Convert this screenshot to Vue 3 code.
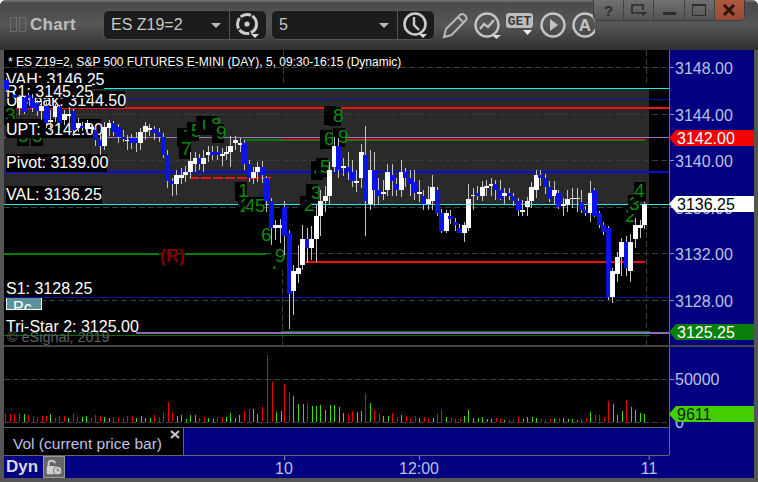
<script setup>
const W = 0, B = 1
const candles = [
  [4,80,90,78,92,B],[12,95,97,92,99,B],[17,97,108,95,115,W],[22,98,112,96,114,B],[26,95,98,93,100,B],[30,98,108,94,112,B],[35,103,111,100,116,B],[39,106,111,100,120,W],[44,106,123,100,128,B],[48,120,122,110,131,W],[53,106,117,104,122,W],[57,107,123,105,128,B],[62,114,120,110,125,W],[67,114,116,107,124,W],[71,111,130,109,136,B],[76,123,128,118,132,W],[80,126,128,122,131,B],[85,123,129,120,135,W],[89,127,129,124,134,W],[93,130,140,126,146,B],[98,140,146,135,155,B],[102,127,146,122,150,W],[107,123,128,120,136,W],[111,123,132,121,136,B],[116,127,137,124,143,B],[121,137,139,130,142,B],[125,140,141,135,150,W],[129,138,143,134,149,B],[134,138,143,132,152,B],[138,132,143,128,150,W],[143,126,132,122,140,W],[147,128,130,124,136,W],[152,129,133,126,140,B],[157,132,137,128,142,B],[161,137,155,133,158,B],
  [165,155,181,150,188,B],[170,181,184,178,196,B],[174,175,184,170,195,W],[179,175,178,168,184,W],[183,172,175,166,182,W],[188,161,172,152,178,W],[193,158,164,152,172,W],[197,158,164,154,170,B],[201,158,164,150,172,W],[206,152,155,146,162,W],[210,152,155,146,160,B],[215,152,155,146,160,B],[220,152,155,148,162,B],[220,154,156,148,166,W],[224,152,154,146,160,W],[228,146,152,136,167,W],[233,140,143,136,150,W],[238,143,145,138,152,W],[242,143,164,140,170,B],[247,164,178,160,182,B],[251,172,178,167,184,W],[255,167,172,162,182,W],[260,167,175,161,183,B],[264,178,201,176,212,B],
  [269,201,228,198,245,B],[273,225,228,220,240,W],[278,225,228,219,243,W],[282,207,236,201,255,B],[287,233,294,230,329,B],[291,271,291,265,315,W],[296,268,274,245,283,W],[300,239,265,225,270,W],[305,239,248,228,263,B],[309,239,248,226,260,W],[314,216,239,205,262,W],[318,201,216,190,236,W],[323,196,201,186,212,W],[327,170,196,162,205,W],[332,146,167,137,172,W],[336,146,170,138,178,B],[341,166,168,158,176,W],[346,167,172,152,180,B],[350,172,181,160,187,B],[354,181,183,170,192,W],[359,152,178,144,188,W],[363,155,201,126,236,B],[368,170,204,150,210,W],[372,170,190,152,206,B],[376,190,196,178,204,B],
  [381,192,194,180,200,W],[385,172,190,164,196,W],[390,175,181,164,196,B],[394,184,190,178,196,B],[399,172,190,160,197,W],[403,172,178,168,187,B],[408,178,184,170,196,B],[412,182,193,170,200,B],[417,192,194,180,202,W],[421,196,204,190,210,B],[426,199,204,186,210,W],[430,187,201,175,210,W],[435,190,213,187,216,B],[439,213,231,209,233,B],[444,213,231,210,233,W],[448,216,219,210,224,B],[453,222,225,218,231,B],[457,228,233,224,233,B],[462,225,233,222,242,W],[466,199,228,184,231,W],[471,195,196,188,210,W],[475,193,196,186,200,B],[480,187,196,181,201,W],[484,186,188,180,196,W],[489,184,186,178,196,W],[493,184,190,180,200,B],[498,190,199,180,200,B],[502,193,196,188,204,W],[507,193,196,188,200,B],[511,196,201,193,206,B],[516,201,210,198,216,B],[520,210,212,200,216,W],[525,201,207,197,216,W],[529,187,201,182,208,W],[534,175,190,170,198,W],[538,175,178,170,186,B],[543,178,187,174,194,B],[547,187,199,181,202,B],[552,190,196,181,204,W],[556,193,207,190,209,B],[561,204,206,198,216,W],[565,199,205,190,212,W],
  [570,198,199,188,208,W],[575,198,199,188,212,W],[579,202,210,190,213,B],[583,210,213,206,216,B],[588,193,213,181,222,W],[592,190,216,188,217,B],[597,213,225,211,228,B],[601,225,232,222,235,B],[606,228,297,226,300,B],[610,271,297,268,303,W],[615,257,274,252,282,W],[619,242,257,238,276,W],[624,242,268,236,276,B],[628,242,271,234,282,W],[633,225,239,218,248,W],[638,225,228,220,238,W],[642,204,225,202,229,W]
]

const digits = [
  [4,5,121,'3'],[17,18,142,'5'],[31,32,142,'5'],[177,183,143,'7'],[187,191,137,'5'],[196,202,131,'6'],[205,211,131,'8'],[212,216,139,'9'],[179,181,155,'7'],
  [235,238,197,'1'],[238,240,212,'2'],[245,245,212,'4'],[253,255,212,'5'],[257,261,241,'6'],[266,270,269,'7'],[271,275,262,'9'],
  [300,304,211,'2'],[306,311,199,'3'],[311,314,176,'4'],[316,320,173,'5'],[320,324,145,'6'],[324,328,121,'7'],[329,333,122,'8'],[333,338,143,'9'],
  [624,625,222,'2'],[628,629,210,'3'],[634,634,197,'4']
]

const lines = [
  { x1: 4, x2: 669, y: 88.5, c: '#16f0f0', w: 1 },
  { x1: 4, x2: 669, y: 99.5, c: '#1010b0', w: 1 },
  { x1: 4, x2: 669, y: 108, c: '#f81010', w: 2 },
  { x1: 4, x2: 669, y: 137.5, c: '#a078c0', w: 1 },
  { x1: 244, x2: 645, y: 140, c: '#0a7a0a', w: 2 },
  { x1: 281, x2: 645, y: 139, c: '#f01010', w: 1 },
  { x1: 4, x2: 669, y: 172, c: '#0808f0', w: 2 },
  { x1: 4, x2: 669, y: 204.5, c: '#16f0f0', w: 1 },
  { x1: 306, x2: 645, y: 262, c: '#f01010', w: 2 },
  { x1: 4, x2: 669, y: 297.5, c: '#1010b0', w: 1 },
  { x1: 281, x2: 650, y: 331.5, c: '#0a7a0a', w: 1 },
  { x1: 136, x2: 669, y: 333, c: '#9068c0', w: 2 },
  { x1: 4, x2: 650, y: 335.5, c: '#0a6a0a', w: 1 }
]

const grid = [67.5, 114.5, 160.5, 207.5, 253.5, 300.5]

const labels = [
  { t: 'VAH: 3146.25', x: 6, y: 85, bx: 6, by: 70, bw: 98, bh: 19 },
  { t: 'UBreak: 3144.50', x: 6, y: 106, bx: 6, by: 91, bw: 119, bh: 17 },
  { t: 'R1: 3145.25', x: 6, y: 97, bx: 6, by: 83, bw: 86, bh: 15 },
  { t: 'UPT: 3142.00', x: 6, y: 135, bx: 6, by: 119, bw: 95, bh: 19 },
  { t: 'Pivot: 3139.00', x: 6, y: 168, bx: 6, by: 154, bw: 101, bh: 18 },
  { t: 'VAL: 3136.25', x: 6, y: 200, bx: 6, by: 186, bw: 96, bh: 18 },
  { t: 'S1: 3128.25', x: 6, y: 294, bx: 6, by: 282, bw: 86, bh: 15 },
  { t: 'Tri-Star 2: 3125.00', x: 6, y: 332, bx: 6, by: 318, bw: 130, bh: 15 }
]

const axisTicks = [
  { t: '3148.00', y: 67.5 }, { t: '3144.00', y: 114.5 }, { t: '3140.00', y: 160.5 },
  { t: '3136.00', y: 207.5 }, { t: '3132.00', y: 253.5 }, { t: '3128.00', y: 300.5 }
]

const flags = [
  { t: '3142.00', y: 130, bg: '#f50000', fg: '#fff' },
  { t: '3136.25', y: 196, bg: '#fff', fg: '#000' },
  { t: '3125.25', y: 324, bg: '#0a800a', fg: '#fff' },
  { t: '9611', y: 406, bg: '#44d000', fg: '#062006' }
]

const flagPts = y => `669,${y + 8} 676,${y} 754,${y} 754,${y + 16} 676,${y + 16}`

const volA = '15r8 30r8 43r8 58r9 71g8 85r7 98r6 112r5 125r6 138r6 151g8 165r4 178r6 192r6 205g4 220r8 232r5 246g5 259g6 272r4 286r7 300r6 313g5 327g4 340r5 355r4 368r4 381r6 395r6 408g4 422g6 436g4 449g4 463r7 476r5 490r10 503r20 517r10 530g6 544g7 557g3 571g7 584g7 598r4 612r5 625g4 639g3 652r5 666r5 679g5 691g9 705g4 718g7 733r11 746r13 760g13 772g8 787r15 800r67 815r40 827g10 842g11 853r38 868r30 880g26 895g18 908g18 922r19 935g16 948g16 961g17 976g12 989g17 1003g17 1016g15'
const volB = '10g9 23r8 37r11 50g10 64g11 76r29 91g19 103r12 116r9 130g6 143g6 157r9 170r5 184g7 197r6 211r4 224r6 238g4 251r5 265r3 278g4 292r8 304r12 319g5 332r4 346r3 359r3 373g6 385g12 400g4 413g4 427g5 440g3 453g3 467r4 480r3 493g2 507r2 520r2 535r5 548g3 562g5 575g5 589g4 602r3 616r2 630r3 643g3 656r4 670g4 683g3 697g3 710g2 724r3 737r4 751g10 764r7 778r7 791r5 805r21 818g18 832g7 845g11 859r22 872g15 886g12 899g9 913g8'
const parseVol = (s, off) => s.split(' ').map(v => {
  const m = v.match(/(\d+)([rg])(\d+)/)
  return { x: off + Math.round(+m[1] / 3), h: +m[3], c: m[2] === 'r' ? '#f00000' : '#44dc00' }
})
const volume = [...parseVol(volA, 0), ...parseVol(volB, 340)]
</script>

<template>
  <div class="win">
    <header class="titlebar">
      <div class="grip"><i></i><i></i></div>
      <span class="title">Chart</span>

      <div class="combo first">
        <span class="combo-text">ES Z19=2</span>
        <b class="caret"></b>
        <span class="combo-btn">
          <svg width="30" height="30" viewBox="0 0 30 30">
            <circle cx="14" cy="14" r="9.5" fill="none" stroke="#ccc" stroke-width="3" stroke-dasharray="11 1.5" />
            <circle cx="14" cy="14" r="2.6" fill="#ccc" />
            <path d="M18 24h8l-4 4z" fill="#ddd" />
          </svg>
        </span>
      </div>

      <div class="combo second">
        <span class="combo-text">5</span>
        <b class="caret"></b>
        <span class="combo-btn">
          <svg width="30" height="30" viewBox="0 0 30 30">
            <circle cx="14" cy="14" r="10.5" fill="none" stroke="#ccc" stroke-width="2.6" />
            <path d="M13 7v8l5 5" fill="none" stroke="#ccc" stroke-width="2.4" />
            <path d="M18 24h8l-4 4z" fill="#ddd" />
          </svg>
        </span>
      </div>

      <svg class="tool" width="28" height="28" viewBox="0 0 28 28">
        <path d="M3 26l2-8L19 4c1.500-1.500 3-1.500 4.500 0l1 1c1.500 1.500 1.500 3 0 4.500L10.500 24z" fill="none" stroke="#b8b8b8" stroke-width="2" />
        <path d="M17 6l6 6" stroke="#b8b8b8" stroke-width="2" />
      </svg>
      <svg class="tool" width="32" height="28" viewBox="0 0 32 28">
        <circle cx="14" cy="14" r="11.500" fill="none" stroke="#c4c4c4" stroke-width="2.400" />
        <path d="M7 18l4-5 4 3 6-7" fill="none" stroke="#c4c4c4" stroke-width="2.200" />
        <path d="M19 24h9l-4.500 4z" fill="#ddd" />
      </svg>
      <svg class="tool get-ic" width="28" height="28" viewBox="0 0 28 28">
        <rect x="0" y="2" width="27" height="15" rx="3" fill="#bdbdbd" />
        <text x="13.500" y="14" class="get">GET</text>
        <path d="M17 19h9l-4.500 5z" fill="#eee" />
      </svg>
      <svg class="tool" width="28" height="28" viewBox="0 0 28 28">
        <circle cx="14" cy="14" r="11.500" fill="none" stroke="#c4c4c4" stroke-width="2.400" />
        <path d="M11 8l8 6-8 6z" fill="#c4c4c4" />
      </svg>
      <svg class="tool" width="24" height="28" viewBox="0 0 24 28">
        <circle cx="14" cy="14" r="11.500" fill="none" stroke="#c4c4c4" stroke-width="2.400" />
        <text x="14" y="20" class="tool-a">A</text>
      </svg>

      <div class="winbtns">
        <span class="wb help">?</span>
        <span class="wb">
          <svg width="18" height="14" viewBox="0 0 18 14">
            <path d="M11 10H2V2h11v5" fill="none" stroke="#2c2c2c" stroke-width="1.600" />
            <path d="M10 9h7l-3.500 4z" fill="#2c2c2c" />
          </svg>
        </span>
        <span class="wb"><b class="min"></b></span>
        <span class="wb"><b class="max"></b></span>
        <span class="wb close">
          <svg width="14" height="12" viewBox="0 0 14 12">
            <path d="M2 1l10 10M12 1L2 11" stroke="#2a1410" stroke-width="3" />
          </svg>
        </span>
      </div>
    </header>

    <div class="body">
      <div class="left">
        <svg class="price" width="665" height="295" viewBox="4 50 665 295">
          <rect x="4" y="50" width="665" height="295" fill="#000" />
          <rect x="4" y="88" width="645" height="116" fill="#2a2a2a" />

          <line v-for="g in grid" :key="g" x1="4" x2="669" :y1="g" :y2="g" class="grid" />
          <line x1="283.500" x2="283.500" y1="50" y2="85" class="grid" />
          <line x1="282.500" x2="282.500" y1="270" y2="345" class="grid" />
          <line x1="646.500" x2="646.500" y1="50" y2="85" class="grid" />
          <line x1="646.500" x2="646.500" y1="205" y2="345" class="grid" />

          <line v-for="(l, i) in lines" :key="i" :x1="l.x1" :x2="l.x2" :y1="l.y" :y2="l.y" :stroke="l.c" :stroke-width="l.w" />
          <line x1="189" x2="271" y1="178" y2="178" stroke="#f01010" stroke-width="2" stroke-dasharray="10 2" />
          <line x1="4" x2="159" y1="254" y2="254" stroke="#0a7a0a" stroke-width="2" />
          <line x1="185" x2="271" y1="254" y2="254" stroke="#0a7a0a" stroke-width="2" />
          <text x="160" y="262" class="resist">(R)</text>

          <text x="8" y="66" class="head">* ES Z19=2, S&amp;P 500 FUTURES E-MINI (DAY), 5, 09:30-16:15 (Dynamic)</text>

          <g v-for="(d, i) in digits" :key="'d' + i">
            <rect :x="d[0]" :y="d[2] - 15" width="12" height="19" fill="#000" />
            <text :x="d[1]" :y="d[2]" class="digit">{{ d[3] }}</text>
          </g>

          <rect x="6" y="298" width="36" height="12" fill="#5a929a" />
          <text x="13" y="313" class="pc">Pc</text>
          <rect x="6" y="298" width="1" height="12" fill="#fff" />
          <rect x="41" y="298" width="1" height="12" fill="#fff" />
          <rect x="6" y="309" width="36" height="24" fill="#000" />
          <rect x="6" y="309" width="36" height="1" fill="#fff" />

          <g v-for="l in labels" :key="l.t">
            <rect :x="l.bx" :y="l.by" :width="l.bw" :height="l.bh" fill="#000" />
            <text :x="l.x" :y="l.y" class="label">{{ l.t }}</text>
          </g>
          <text x="7" y="342" class="copy">© eSignal, 2019</text>

          <g v-for="(c, i) in candles" :key="'c' + i">
            <line :x1="c[0] + 2.500" :x2="c[0] + 2.500" :y1="c[3]" :y2="c[4]" class="wick" />
            <rect :x="c[0]" :y="c[1]" width="5" :height="c[2] - c[1]" :fill="c[5] ? '#0a14ea' : '#fff'" />
          </g>
        </svg>

        <div class="sep"></div>

        <svg class="vol" width="665" height="80" viewBox="4 347 665 80">
          <rect x="4" y="347" width="665" height="80" fill="#000" />
          <line x1="4" x2="669" y1="379.500" y2="379.500" class="grid" />
          <line x1="4" x2="669" y1="422.500" y2="422.500" class="grid" />
          <rect v-for="(v, i) in volume" :key="i" :x="v.x" :y="422 - v.h" width="1" :height="v.h" :fill="v.c" />
        </svg>

        <div class="tabrow">
          <div class="tab">
            <span>Vol (current price bar)</span>
            <svg class="tab-x" width="10" height="9" viewBox="0 0 10 9">
              <path d="M1 1l8 7M9 1L1 8" stroke="#c8c8c8" stroke-width="2.200" />
            </svg>
          </div>
          <div class="tab-fill"></div>
        </div>

        <div class="timebar">
          <span class="dyn">Dyn</span>
          <span class="lock">
            <svg width="22" height="22" viewBox="0 0 22 22">
              <path d="M5 11V7c0-4 7-4 7 0" fill="none" stroke="#d0d0d0" stroke-width="2" />
              <rect x="3" y="10" width="12" height="9" rx="1" fill="#d0d0d0" />
              <circle cx="15" cy="15" r="4.500" fill="#d0d0d0" stroke="#666" />
              <path d="M15 12.500V15h2" fill="none" stroke="#555" />
            </svg>
          </span>
          <div class="times">
            <span class="time t10">10</span>
            <span class="time t12">12:00</span>
            <span class="time t11">11</span>
          </div>
        </div>
      </div>

      <svg class="axis" width="85" height="428" viewBox="669 50 85 428">
        <rect x="669" y="50" width="85" height="428" fill="#000080" />
        <rect x="669" y="50" width="1" height="405" fill="#6a6a6a" />
        <rect x="669" y="345" width="85" height="2" fill="#444" />
        <g v-for="a in axisTicks" :key="a.t">
          <line x1="670" x2="674" :y1="a.y" :y2="a.y" stroke="#8a8fb0" />
          <text x="675" :y="a.y + 6.500" class="tick">{{ a.t }}</text>
        </g>
        <line x1="670" x2="674" y1="379.500" y2="379.500" stroke="#8a8fb0" />
        <text x="675" y="385" class="tick">50000</text>
        <text x="675" y="428" class="tick">0</text>
        <g v-for="f in flags" :key="f.t">
          <polygon :points="flagPts(f.y)" :fill="f.bg" />
          <text x="677" :y="f.y + 14" class="flag" :fill="f.fg">{{ f.t }}</text>
        </g>
      </svg>
    </div>
  </div>
</template>

<style scoped>
.win {
  width: 758px;
  height: 482px;
  box-sizing: border-box;
  padding: 0 4px 4px;
  background: #555;
  overflow: hidden;
  display: flex;
  flex-direction: column;
  font-family: "Liberation Sans", Arial, sans-serif;
  border-radius: 6px 6px 0 0;
}
.titlebar {
  position: relative;
  height: 50px;
  margin: 0 -4px;
  padding: 0 0 0 10px;
  display: flex;
  align-items: center;
  background: linear-gradient(#7a7a7a 0, #4a4a4a 3px, #565656 24px, #2f2f2f 50px);
  flex: none;
}
.grip {
  display: flex;
  gap: 2px;
  margin-top: -1px;
}
.grip i {
  width: 5px;
  height: 13px;
  border: 1px solid #6e6e6e;
  display: block;
}
.title {
  margin-left: 4px;
  font-size: 17px;
  font-weight: 700;
  letter-spacing: 0.3px;
  color: #bdbdbd;
  width: 73px;
}
.combo {
  height: 30px;
  box-sizing: border-box;
  width: 164px;
  display: flex;
  align-items: center;
  background: #1c1c1c;
  border: 1px solid #555;
  border-radius: 6px;
  color: #c8c8c8;
  font-size: 16px;
}
.second {
  margin-left: 4px;
  margin-right: 6px;
}
.combo-text {
  padding-left: 7px;
  flex: 1;
}
.caret {
  width: 0;
  height: 0;
  border-left: 5px solid transparent;
  border-right: 5px solid transparent;
  border-top: 5px solid #bbb;
  margin-right: 8px;
}
.combo-btn {
  width: 36px;
  height: 28px;
  border-left: 1px solid #555;
  display: flex;
  align-items: center;
  justify-content: center;
}
.tool {
  flex: none;
  margin-right: 4px;
}
.get-ic {
  margin-left: -3px;
  margin-right: 5px;
}
.get {
  font-size: 13px;
  font-weight: 700;
  text-anchor: middle;
  fill: #3a3a3a;
  font-family: "Liberation Mono", monospace;
}
.tool-a {
  font-size: 17px;
  font-weight: 700;
  text-anchor: middle;
  fill: #c4c4c4;
}
.winbtns {
  position: absolute;
  left: 593px;
  top: 0;
  width: 152px;
  height: 21px;
  display: flex;
  background: linear-gradient(#707070, #555);
  border: 1px solid #3c3c3c;
  border-top: 0;
  border-radius: 0 0 5px 5px;
  box-sizing: border-box;
  overflow: hidden;
}
.wb {
  flex: 1;
  display: flex;
  align-items: center;
  justify-content: center;
  border-left: 1px solid #444;
}
.wb:first-child {
  border-left: 0;
}
.help {
  font-size: 15px;
  font-weight: 700;
  color: #2c2c2c;
}
.min {
  width: 13px;
  height: 3px;
  background: #2c2c2c;
  margin-top: 6px;
}
.max {
  width: 12px;
  height: 9px;
  border: 1px solid #2c2c2c;
  border-top-width: 2px;
}
.close {
  background: linear-gradient(#b0573f, #9c4a34);
}
.body {
  flex: 1;
  display: flex;
  min-height: 0;
}
.left {
  width: 665px;
  display: flex;
  flex-direction: column;
}
.price, .vol, .axis {
  display: block;
  flex: none;
}
.price line {
  shape-rendering: crispEdges;
}
.sep {
  height: 2px;
  background: #444;
}
.grid {
  stroke: #3c3c3c;
  stroke-width: 1;
  stroke-dasharray: 6 3;
}
.wick {
  stroke: #c4c4c4;
  stroke-width: 1;
}
.head {
  font-size: 12px;
  fill: #fff;
}
.label {
  font-size: 16px;
  fill: #fff;
}
.digit {
  font-size: 19px;
  fill: #0c8c0c;
}
.resist {
  font-size: 18px;
  font-weight: 700;
  fill: #800000;
}
.pc {
  font-size: 16px;
  fill: #fff;
}
.copy {
  font-size: 14.400px;
  fill: #606060;
}
.tick {
  font-size: 16px;
  fill: #bcc2e4;
}
.flag {
  font-size: 16px;
}
.tabrow {
  height: 28px;
  box-sizing: border-box;
  display: flex;
  border-top: 1px solid #666;
}
.tab {
  width: 180px;
  background: #000;
  position: relative;
  color: #bcc2e4;
  font-size: 15.500px;
  padding: 7px 0 0 9px;
  box-sizing: border-box;
  border-right: 1px solid #666;
  white-space: nowrap;
}
.tab-x {
  position: absolute;
  left: 166px;
  top: 2px;
}
.tab-fill {
  flex: 1;
  background: #000080;
}
.timebar {
  height: 23px;
  box-sizing: border-box;
  border-top: 1px solid #666;
  background: #000080;
  display: flex;
  align-items: center;
  position: relative;
}
.dyn {
  font-size: 17px;
  font-weight: 700;
  color: #d8d8e0;
  margin-left: 2px;
  width: 37px;
}
.lock {
  width: 22px;
  height: 22px;
  background: #666;
  border: 1px solid #999;
  box-sizing: border-box;
  display: flex;
  align-items: center;
  justify-content: center;
}
.times {
  position: absolute;
  inset: 0;
  pointer-events: none;
}
.time {
  position: absolute;
  top: 4px;
  font-size: 16px;
  color: #bcc2e4;
  transform: translateX(-50%);
}
.time::before {
  content: "";
  position: absolute;
  left: 50%;
  top: -4px;
  width: 1px;
  height: 4px;
  background: #8a8fb0;
}
.t10 { left: 280px; }
.t12 { left: 415px; }
.t11 { left: 645px; }
</style>
